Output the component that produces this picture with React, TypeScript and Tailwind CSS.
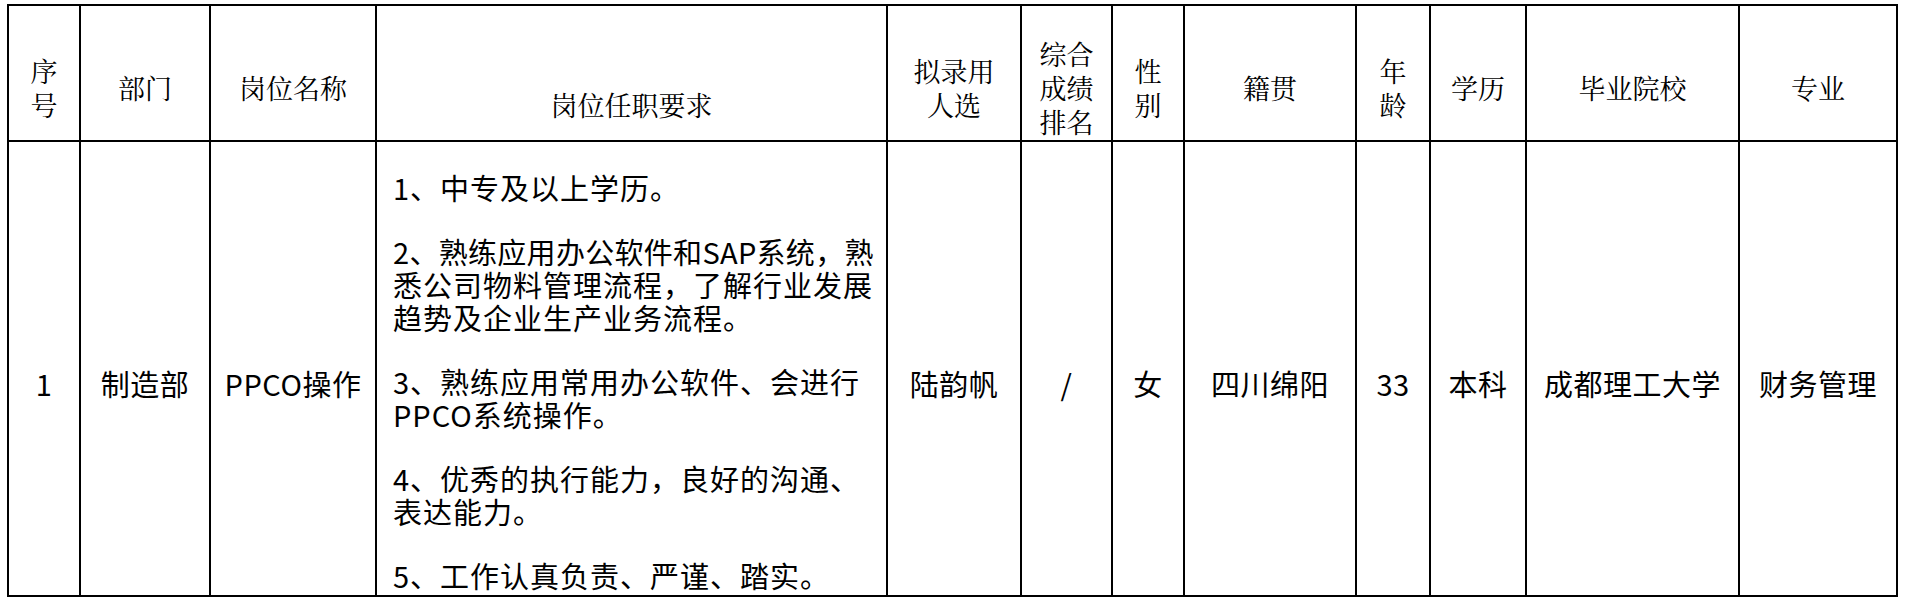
import React from "react";

const headFont = "font-['Noto_Serif_CJK_SC','Noto_Sans_CJK_SC',serif]";
const bodyFont = "font-['Noto_Sans_CJK_SC',sans-serif]";

const headers: { lines: string[]; low?: boolean }[] = [
  { lines: ["序", "号"] },
  { lines: ["部门"] },
  { lines: ["岗位名称"] },
  { lines: ["岗位任职要求"], low: true },
  { lines: ["拟录用", "人选"] },
  { lines: ["综合", "成绩", "排名"] },
  { lines: ["性", "别"] },
  { lines: ["籍贯"] },
  { lines: ["年", "龄"] },
  { lines: ["学历"] },
  { lines: ["毕业院校"] },
  { lines: ["专业"] },
];

const requirements: string[][] = [
  ["1、中专及以上学历。"],
  ["2、熟练应用办公软件和SAP系统，熟", "悉公司物料管理流程，了解行业发展", "趋势及企业生产业务流程。"],
  ["3、熟练应用常用办公软件、会进行", "PPCO系统操作。"],
  ["4、优秀的执行能力，良好的沟通、", "表达能力。"],
  ["5、工作认真负责、严谨、踏实。"],
];

const before = ["1", "制造部", "PPCO操作"];
const after = ["陆韵帆", "/", "女", "四川绵阳", "33", "本科", "成都理工大学", "财务管理"];

function HeadCell({ lines, low }: { lines: string[]; low?: boolean }) {
  return (
    <div
      className={`flex h-[136px] flex-col items-center justify-center border-r-2 border-b-2 border-black text-center ${
        low ? "pt-[64px]" : "pt-[29px]"
      }`}
    >
      {lines.map((l) => (
        <div key={l} className="whitespace-nowrap leading-[34px]">
          {l}
        </div>
      ))}
    </div>
  );
}

function BodyCell({ text }: { text: string }) {
  return (
    <div className="flex h-[455px] items-center justify-center border-r-2 border-b-2 border-black pt-[30px] text-center">
      <span className="whitespace-nowrap tracking-[0.5px]">{text}</span>
    </div>
  );
}

export default function App() {
  return (
    <div className="min-h-[604px] w-[1906px] bg-white pl-[7px] pt-[4px] text-black">
      <div className="grid w-max grid-cols-[72px_130px_166px_511px_134px_91px_72px_172px_74px_96px_213px_158px] border-t-2 border-l-2 border-black">
        <div className={`contents text-[27px] ${headFont}`}>
          {headers.map((h, i) => (
            <HeadCell key={i} lines={h.lines} low={h.low} />
          ))}
        </div>
        <div className={`contents text-[29px] ${bodyFont}`}>
          {before.map((t) => (
            <BodyCell key={t} text={t} />
          ))}
          <div className="h-[455px] border-r-2 border-b-2 border-black pt-[29px] pl-[16px]">
            {requirements.map((p, i) => (
              <div key={i} className={i > 0 ? "mt-[31px]" : ""}>
                {p.map((line) => (
                  <div
                    key={line}
                    className={`whitespace-nowrap leading-[33px] ${
                      line.includes("SAP") ? "tracking-[0.3px]" : "tracking-[1px]"
                    }`}
                  >
                    {line}
                  </div>
                ))}
              </div>
            ))}
          </div>
          {after.map((t) => (
            <BodyCell key={t} text={t} />
          ))}
        </div>
      </div>
    </div>
  );
}
